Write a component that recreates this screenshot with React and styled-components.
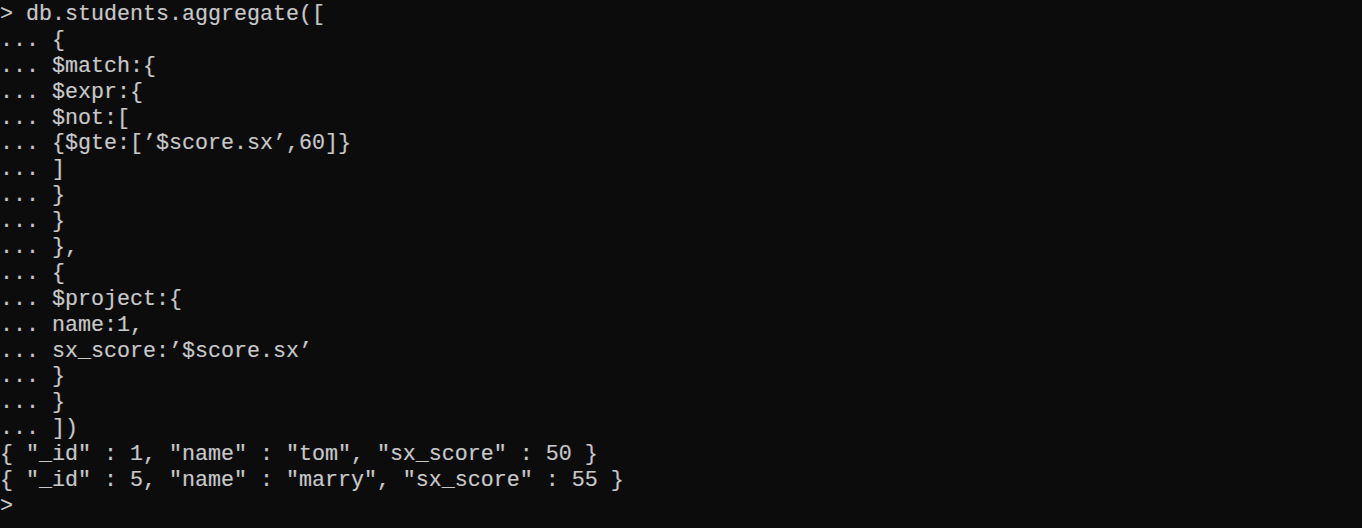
import React from "react";
import styled, { createGlobalStyle } from "styled-components";

const lines = [
  ["> ", "db.students.aggregate(["],
  ["... ", "{"],
  ["... ", "$match:{"],
  ["... ", "$expr:{"],
  ["... ", "$not:["],
  ["... ", "{$gte:[’$score.sx’,60]}"],
  ["... ", "]"],
  ["... ", "}"],
  ["... ", "}"],
  ["... ", "},"],
  ["... ", "{"],
  ["... ", "$project:{"],
  ["... ", "name:1,"],
  ["... ", "sx_score:’$score.sx’"],
  ["... ", "}"],
  ["... ", "}"],
  ["... ", "])"],
  ["", "{ ″_id″ : 1, ″name″ : ″tom″, ″sx_score″ : 50 }"],
  ["", "{ ″_id″ : 5, ″name″ : ″marry″, ″sx_score″ : 55 }"],
  [">", ""],
];

function App() {
  return (
    <>
      <GlobalStyle />
      <Terminal>
        {lines.map(([prompt, text], i) => (
          <Line key={i}>
            {prompt}
            {text}
          </Line>
        ))}
      </Terminal>
    </>
  );
}

const GlobalStyle = createGlobalStyle`
  html, body {
    margin: 0;
    padding: 0;
    background: #0c0c0c;
  }
`;

const Terminal = styled.main`
  box-sizing: border-box;
  width: 100%;
  height: 528px;
  padding: 2px 0 0 0;
  background: #0c0c0c;
  color: #c8c8c8;
  font-family: "Liberation Mono", monospace;
  font-size: 21.67px;
  overflow: hidden;
`;

const Line = styled.div`
  height: 25.9px;
  line-height: 25.9px;
  white-space: pre;
  text-shadow: -0.5px 0 rgba(60, 140, 230, 0.3), 0.5px 0 rgba(230, 150, 60, 0.25);
`;

export default App;
